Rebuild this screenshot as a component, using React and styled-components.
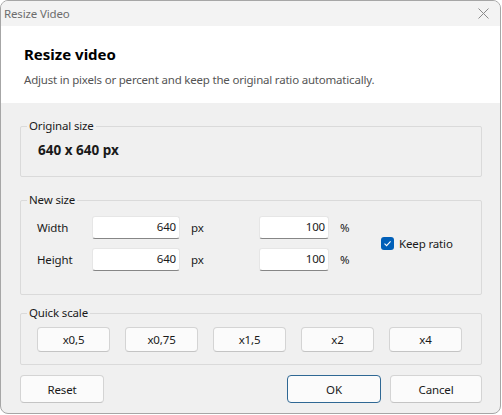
import styled, { createGlobalStyle } from "styled-components";

const GlobalStyle = createGlobalStyle`
  html, body {
    margin: 0;
    padding: 0;
    background: #ffffff;
  }
  * {
    box-sizing: border-box;
  }
`;

const Window = styled.div`
  width: 501px;
  height: 414px;
  border: 1px solid #a6a6a6;
  border-radius: 8px;
  overflow: hidden;
  display: flex;
  flex-direction: column;
  background: #f0f0f0;
  font-family: "Segoe UI", "Noto Sans", sans-serif;
  font-size: 11.5px;
  letter-spacing: -0.15px;
  color: #1a1a1a;
`;

const TitleBar = styled.div`
  height: 25px;
  flex: none;
  display: flex;
  align-items: center;
  justify-content: space-between;
  padding: 0 10px 0 3px;
  background: #f3f3f3;
  color: #6d6d6d;
`;

const CloseIcon = styled.svg`
  width: 11px;
  height: 11px;
  margin-right: 1px;
`;

const Header = styled.div`
  height: 77px;
  flex: none;
  background: #ffffff;
  padding: 17px 23px 0;
  display: flex;
  flex-direction: column;
  gap: 7px;
`;

const Heading = styled.div`
  font-size: 15px;
  font-weight: 700;
  letter-spacing: 0;
  color: #000;
  line-height: 22px;
`;

const Subtitle = styled.div`
  color: #555;
  line-height: 16px;
  letter-spacing: -0.2px;
`;

const Body = styled.div`
  flex: 1;
  padding: 0 18px 0 19px;
  display: flex;
  flex-direction: column;
`;

const Group = styled.section`
  margin-top: ${(p) => p.$mt}px;
  height: ${(p) => p.$h}px;
  padding: 0 16px;
  border: 1px solid #dadada;
  border-radius: 2px;
  display: flex;
  flex-direction: column;
`;

const Caption = styled.div`
  align-self: flex-start;
  margin: -9px 0 0 -10px;
  padding: 0 2px;
  line-height: 16px;
  background: #f0f0f0;
  color: #1a1a1a;
`;

const Content = styled.div`
  margin-top: ${(p) => p.$gap}px;
`;

const SizeValue = styled.div`
  font-size: 13.5px;
  font-weight: 700;
  letter-spacing: 0;
  line-height: 18px;
  padding-left: 1px;
`;

const SizeGrid = styled.div`
  display: grid;
  grid-template-columns: 55px 88px 79px 70px 52px auto;
  grid-template-rows: 23px 23px;
  row-gap: 9px;
  align-items: center;
`;

const FieldLabel = styled.span``;

const Input = styled.div`
  height: 23px;
  background: #fff;
  border: 1px solid #e6e6e6;
  border-bottom: 1px solid #868686;
  border-radius: 3px;
  text-align: right;
  padding: 0 3px 0 0;
  line-height: 20px;
`;

const Unit = styled.span`
  padding-left: 11px;
`;

const CheckLabel = styled.label`
  grid-column: 6;
  grid-row: 1 / span 2;
  display: flex;
  align-items: center;
  gap: 5px;
`;

const CheckBox = styled.span`
  width: 13px;
  height: 13px;
  border-radius: 3px;
  background: #005fb8;
  display: inline-flex;
  align-items: center;
  justify-content: center;
`;

const ScaleRow = styled.div`
  display: flex;
  gap: 15px;
`;

const Button = styled.button`
  width: ${(p) => p.$w}px;
  height: ${(p) => p.$h}px;
  background: #fbfbfb;
  border: 1px solid ${(p) => (p.$primary ? "#2f6894" : "#d4d4d4")};
  border-bottom-color: ${(p) => (p.$primary ? "#2f6894" : "#c4c4c4")};
  border-radius: 4px;
  font-family: inherit;
  font-size: inherit;
  letter-spacing: inherit;
  color: #1a1a1a;
  padding: 0;
`;

const Footer = styled.div`
  margin-top: 10px;
  display: flex;
  gap: 9px;
  & > :first-child {
    margin-right: auto;
  }
`;

const scales = ["x0,5", "x0,75", "x1,5", "x2", "x4"];

export default function App() {
  return (
    <>
      <GlobalStyle />
      <Window>
        <TitleBar>
          <span>Resize Video</span>
          <CloseIcon viewBox="0 0 11 11">
            <path d="M0.5 0.5 L10.5 10.5 M10.5 0.5 L0.5 10.5" stroke="#8a8a8a" strokeWidth="1" />
          </CloseIcon>
        </TitleBar>
        <Header>
          <Heading>Resize video</Heading>
          <Subtitle>Adjust in pixels or percent and keep the original ratio automatically.</Subtitle>
        </Header>
        <Body>
          <Group $mt={23} $h={51}>
            <Caption>Original size</Caption>
            <Content $gap={7}>
              <SizeValue>640 x 640 px</SizeValue>
            </Content>
          </Group>
          <Group $mt={23} $h={95}>
            <Caption>New size</Caption>
            <Content $gap={8}>
              <SizeGrid>
                <FieldLabel>Width</FieldLabel>
                <Input>640</Input>
                <Unit>px</Unit>
                <Input>100</Input>
                <Unit>%</Unit>
                <CheckLabel>
                  <CheckBox>
                    <svg width="9" height="9" viewBox="0 0 9 9">
                      <path d="M1.5 4.7 L3.6 6.7 L7.6 2.4" fill="none" stroke="#fff" strokeWidth="1.1" />
                    </svg>
                  </CheckBox>
                  Keep ratio
                </CheckLabel>
                <FieldLabel>Height</FieldLabel>
                <Input>640</Input>
                <Unit>px</Unit>
                <Input>100</Input>
                <Unit>%</Unit>
              </SizeGrid>
            </Content>
          </Group>
          <Group $mt={18} $h={52}>
            <Caption>Quick scale</Caption>
            <Content $gap={6}>
              <ScaleRow>
                {scales.map((s) => (
                  <Button key={s} $w={73} $h={25}>
                    {s}
                  </Button>
                ))}
              </ScaleRow>
            </Content>
          </Group>
          <Footer>
            <Button $w={84} $h={28}>Reset</Button>
            <Button $w={94} $h={28} $primary>OK</Button>
            <Button $w={92} $h={28}>Cancel</Button>
          </Footer>
        </Body>
      </Window>
    </>
  );
}
